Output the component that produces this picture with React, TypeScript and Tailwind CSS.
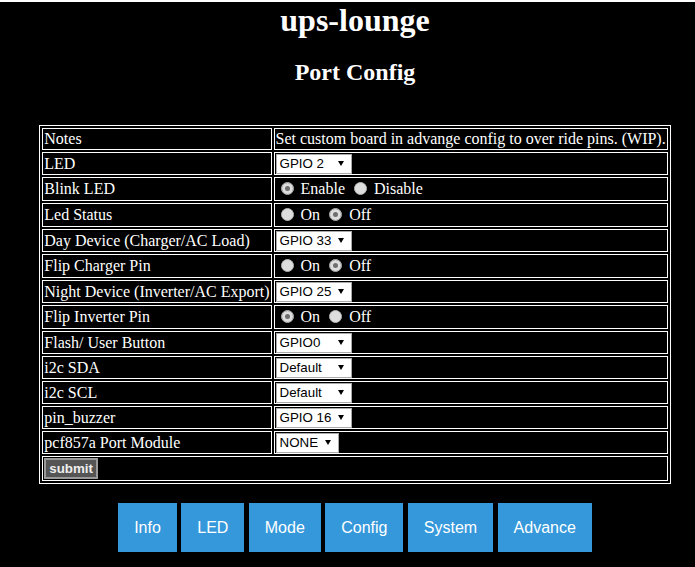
import React from 'react';

type Row =
  | { label: string; kind: 'text'; text: string }
  | { label: string; kind: 'select'; value: string; width?: string }
  | { label: string; kind: 'radio'; options: [string, string]; checked: 0 | 1 };

const rows: Row[] = [
  { label: 'Notes', kind: 'text', text: 'Set custom board in advange config to over ride pins. (WIP).' },
  { label: 'LED', kind: 'select', value: 'GPIO 2' },
  { label: 'Blink LED', kind: 'radio', options: ['Enable', 'Disable'], checked: 0 },
  { label: 'Led Status', kind: 'radio', options: ['On', 'Off'], checked: 1 },
  { label: 'Day Device (Charger/AC Load)', kind: 'select', value: 'GPIO 33' },
  { label: 'Flip Charger Pin', kind: 'radio', options: ['On', 'Off'], checked: 1 },
  { label: 'Night Device (Inverter/AC Export)', kind: 'select', value: 'GPIO 25' },
  { label: 'Flip Inverter Pin', kind: 'radio', options: ['On', 'Off'], checked: 0 },
  { label: 'Flash/ User Button', kind: 'select', value: 'GPIO0' },
  { label: 'i2c SDA', kind: 'select', value: 'Default' },
  { label: 'i2c SCL', kind: 'select', value: 'Default' },
  { label: 'pin_buzzer', kind: 'select', value: 'GPIO 16' },
  { label: 'pcf857a Port Module', kind: 'select', value: 'NONE', width: 'w-[63px]' },
];

const tabs = ['Info', 'LED', 'Mode', 'Config', 'System', 'Advance'];

function Select({ value, width }: { value: string; width?: string }) {
  return (
    <span
      className={`flex h-[20px] items-center justify-between border border-[#a9a9a9] bg-white pl-[3px] pr-[7px] font-['Liberation_Sans',Arial,sans-serif] text-[13.33px] leading-[16px] text-black ${width ?? 'w-[76px]'}`}
    >
      <span>{value}</span>
      <span className="h-0 w-0 border-x-[3.5px] border-t-[5px] border-x-transparent border-t-black" />
    </span>
  );
}

function Radio({ checked }: { checked: boolean }) {
  return (
    <span
      className={`mb-[2px] ml-[5px] mr-[3px] h-[13px] w-[13px] shrink-0 rounded-full border border-[#b4b4b4] ${
        checked ? 'bg-[#6e6e6e] shadow-[inset_0_0_0_3px_#dedede]' : 'bg-[#dedede]'
      }`}
    />
  );
}

function Value({ row }: { row: Row }) {
  if (row.kind === 'text') return <div className="h-[18px] whitespace-nowrap">{row.text}</div>;
  if (row.kind === 'select')
    return (
      <div className="flex h-[19px] items-center">
        <Select value={row.value} width={row.width} />
      </div>
    );
  return (
    <div className="flex h-[20px] items-center whitespace-nowrap">
      <Radio checked={row.checked === 0} />
      <span className="ml-[4px] mr-[4px]">{row.options[0]}</span>
      <Radio checked={row.checked === 1} />
      <span className="ml-[4px]">{row.options[1]}</span>
    </div>
  );
}

export default function App() {
  return (
    <div className="min-h-screen bg-black pl-[15px] text-white font-['Liberation_Serif','Times_New_Roman',serif]">
      <h1 className="mt-[2px] text-center text-[32px] font-bold leading-[37px]">ups-lounge</h1>
      <h2 className="mt-[19px] text-center text-[24px] font-bold leading-[28px]">Port Config</h2>

      <table className="mx-auto mt-[39px] border-separate border-spacing-[2px] border border-white text-[16px] leading-[18px]">
        <tbody>
          {rows.map((row) => (
            <tr key={row.label}>
              <td className="whitespace-nowrap border border-white p-[1px] text-left align-middle">{row.label}</td>
              <td className="border border-white p-[1px] text-left align-middle">
                <Value row={row} />
              </td>
            </tr>
          ))}
          <tr>
            <td colSpan={2} className="border border-white p-[1px] text-left">
              <div className="flex h-[21px] items-center">
                <button
                  type="button"
                  className="h-[21px] border-2 border-[#9a9a9a] bg-[#555555] px-[3px] font-['Liberation_Sans',Arial,sans-serif] text-[13.33px] font-bold leading-[15px] text-[#eeeeee]"
                >
                  submit
                </button>
              </div>
            </td>
          </tr>
        </tbody>
      </table>

      <nav className="mt-[19px] flex justify-center gap-[4.4px] font-['Liberation_Sans',Arial,sans-serif] text-[16px]">
        {tabs.map((tab) => (
          <a key={tab} href="#" className="bg-[#3498db] px-4 py-[15px] leading-[19px] text-white">
            {tab}
          </a>
        ))}
      </nav>
    </div>
  );
}
